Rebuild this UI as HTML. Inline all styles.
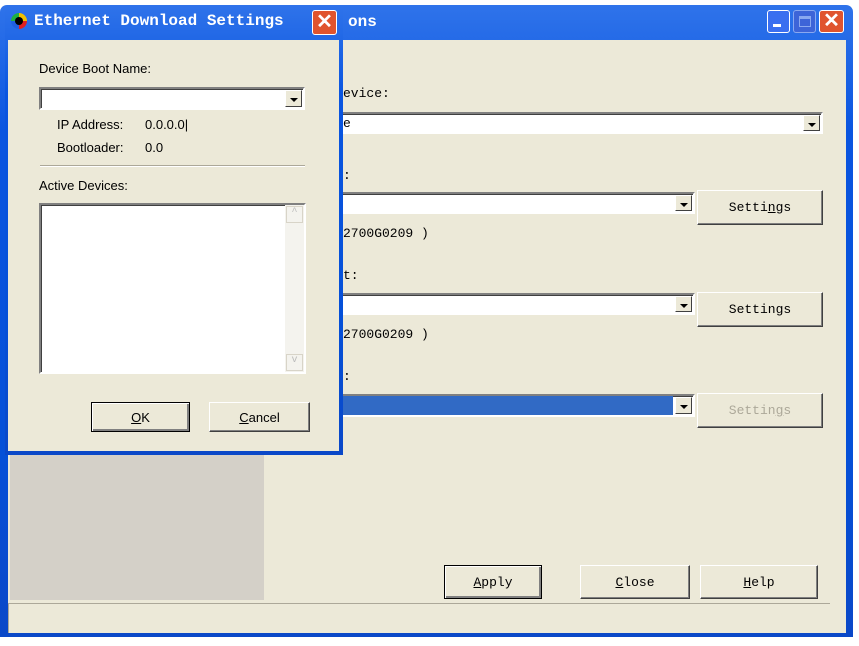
<!DOCTYPE html>
<html><head><style>
*{margin:0;padding:0;box-sizing:border-box}
body{width:859px;height:646px;background:#fff;position:relative;overflow:hidden;font-family:"Liberation Mono",monospace;}
.a{position:absolute}
.tb{background:linear-gradient(#2f73ea,#0a55e0 20%,#0550d8 70%,#0a48c8);}
.face{background:#ECE9D8}
.combo{position:absolute;background:#fff;border:2px solid;border-color:#808080 #fff #fff #808080;box-shadow:inset 1px 1px #404040}
.arr{position:absolute;right:1px;top:1px;bottom:1px;width:17px;background:#ECE9D8;border:1px solid;border-color:#fff #404040 #404040 #fff}
.arr:after{content:"";position:absolute;left:4px;top:7px;border-left:4px solid transparent;border-right:4px solid transparent;border-top:4px solid #000}
.btn{position:absolute;background:#ECE9D8;border:1px solid;border-color:#fff #404040 #404040 #fff;box-shadow:inset -1px -1px #808080;display:flex;align-items:center;justify-content:center;font-size:13px;font-family:"Liberation Mono",monospace}
.mono{font-family:"Liberation Mono",monospace;font-size:13px}
.sans{font-family:"Liberation Sans",sans-serif;font-size:13px}
u{text-decoration:underline}
</style></head><body>
<!-- main window -->
<div class="a tb" style="left:0;top:5px;width:853px;height:632px;border-radius:7px 7px 0 0;"></div>
<div class="a face" style="left:8px;top:40px;width:838px;height:593px;"></div>
<div class="a" style="left:348px;top:13px;color:#fff;font:bold 16px 'Liberation Mono',monospace">ons</div>
<div class="a" style="left:767px;top:10px;width:23px;height:23px;border:1px solid #fff;border-radius:3px;background:#3a6ff0"><div class="a" style="left:5px;top:13px;width:8px;height:3px;background:#fff"></div></div>
<div class="a" style="left:793px;top:10px;width:23px;height:23px;border:1px solid #8aa8f0;border-radius:3px;background:#3d64d8"><div class="a" style="left:5px;top:5px;width:12px;height:11px;border:1px solid #8aa8f0;border-top-width:3px"></div></div>
<div class="a" style="left:819px;top:10px;width:25px;height:23px;border:1px solid #fff;border-radius:3px;background:#e0542e;color:#fff;font:bold 20px 'Liberation Sans';text-align:center;line-height:21px">✕</div>

<div class="a mono" style="left:343px;top:86px">evice:</div>
<div class="combo" style="left:300px;top:112px;width:523px;height:22px"><div class="arr"></div></div>
<div class="a mono" style="left:343px;top:116px">e</div>
<div class="a mono" style="left:343px;top:168px">:</div>
<div class="combo" style="left:300px;top:192px;width:395px;height:22px"><div class="arr"></div></div>
<div class="btn" style="left:697px;top:190px;width:126px;height:35px">Setti<u>n</u>gs</div>
<div class="a mono" style="left:343px;top:226px">2700G0209 )</div>
<div class="a mono" style="left:343px;top:268px">t:</div>
<div class="combo" style="left:300px;top:293px;width:395px;height:22px"><div class="arr"></div></div>
<div class="btn" style="left:697px;top:292px;width:126px;height:35px">Settings</div>
<div class="a mono" style="left:343px;top:327px">2700G0209 )</div>
<div class="a mono" style="left:343px;top:369px">:</div>
<div class="combo" style="left:300px;top:394px;width:395px;height:23px"><div class="a" style="left:0;top:0;right:20px;bottom:0;background:#316AC5"></div><div class="arr"></div></div>
<div class="btn" style="left:697px;top:393px;width:126px;height:35px;color:#aca899">Settin<u>g</u>s</div>

<div class="a" style="left:10px;top:455px;width:254px;height:145px;background:#D4D0C8"></div>
<div class="btn" style="left:444px;top:565px;width:98px;height:34px;border-color:#000;box-shadow:inset 1px 1px #fff,inset -2px -2px #808080"><u>A</u>pply</div>
<div class="btn" style="left:580px;top:565px;width:110px;height:34px"><u>C</u>lose</div>
<div class="btn" style="left:700px;top:565px;width:118px;height:34px"><u>H</u>elp</div>
<div class="a" style="left:8px;top:603px;width:822px;height:30px;border-top:1px solid #aca899;border-left:1px solid #aca899"></div>

<!-- dialog -->
<div class="a tb" style="left:5px;top:5px;width:338px;height:450px;border-radius:7px 7px 0 0;"></div>
<div class="a face" style="left:8px;top:40px;width:331px;height:411px;"></div>
<div class="a" style="left:11px;top:13px;width:16px;height:16px;border-radius:50%;background:conic-gradient(#f0c000 0 25%,#e02020 0 50%,#2060e0 0 75%,#20b040 0)"><div class="a" style="left:4px;top:4px;width:8px;height:8px;border-radius:50%;background:#000"></div></div>
<div class="a" style="left:34px;top:12px;color:#fff;font:bold 16px 'Liberation Mono',monospace;white-space:nowrap">Ethernet Download Settings</div>
<div class="a" style="left:312px;top:10px;width:25px;height:25px;border:1px solid #fff;border-radius:3px;background:#e0542e;color:#fff;font:bold 20px 'Liberation Sans';text-align:center;line-height:23px">✕</div>
<div class="a sans" style="left:39px;top:61px">Device Boot Name:</div>
<div class="combo" style="left:39px;top:87px;width:266px;height:23px"><div class="arr"></div></div>
<div class="a sans" style="left:57px;top:117px">IP Address:</div>
<div class="a sans" style="left:145px;top:117px">0.0.0.0|</div>
<div class="a sans" style="left:57px;top:140px">Bootloader:</div>
<div class="a sans" style="left:145px;top:140px">0.0</div>
<div class="a" style="left:40px;top:165px;width:265px;height:2px;border-top:1px solid #aca899;border-bottom:1px solid #fff"></div>
<div class="a sans" style="left:39px;top:178px">Active Devices:</div>
<div class="combo" style="left:39px;top:203px;width:267px;height:171px"><div class="a" style="right:0;top:0;bottom:0;width:19px;background:#f4f3ee"></div><div class="a" style="right:1px;top:1px;width:17px;height:17px;border:1px solid #d8d4c8;color:#bbb;font-size:10px;text-align:center">^</div><div class="a" style="right:1px;bottom:1px;width:17px;height:17px;border:1px solid #d8d4c8;color:#bbb;font-size:10px;text-align:center">v</div></div>
<div class="btn sans" style="left:91px;top:402px;width:99px;height:30px;border-color:#000;box-shadow:inset 1px 1px #fff,inset -2px -2px #808080;font-family:'Liberation Sans'"><u>O</u>K</div>
<div class="btn sans" style="left:209px;top:402px;width:101px;height:30px;font-family:'Liberation Sans'"><u>C</u>ancel</div>
</body></html>
